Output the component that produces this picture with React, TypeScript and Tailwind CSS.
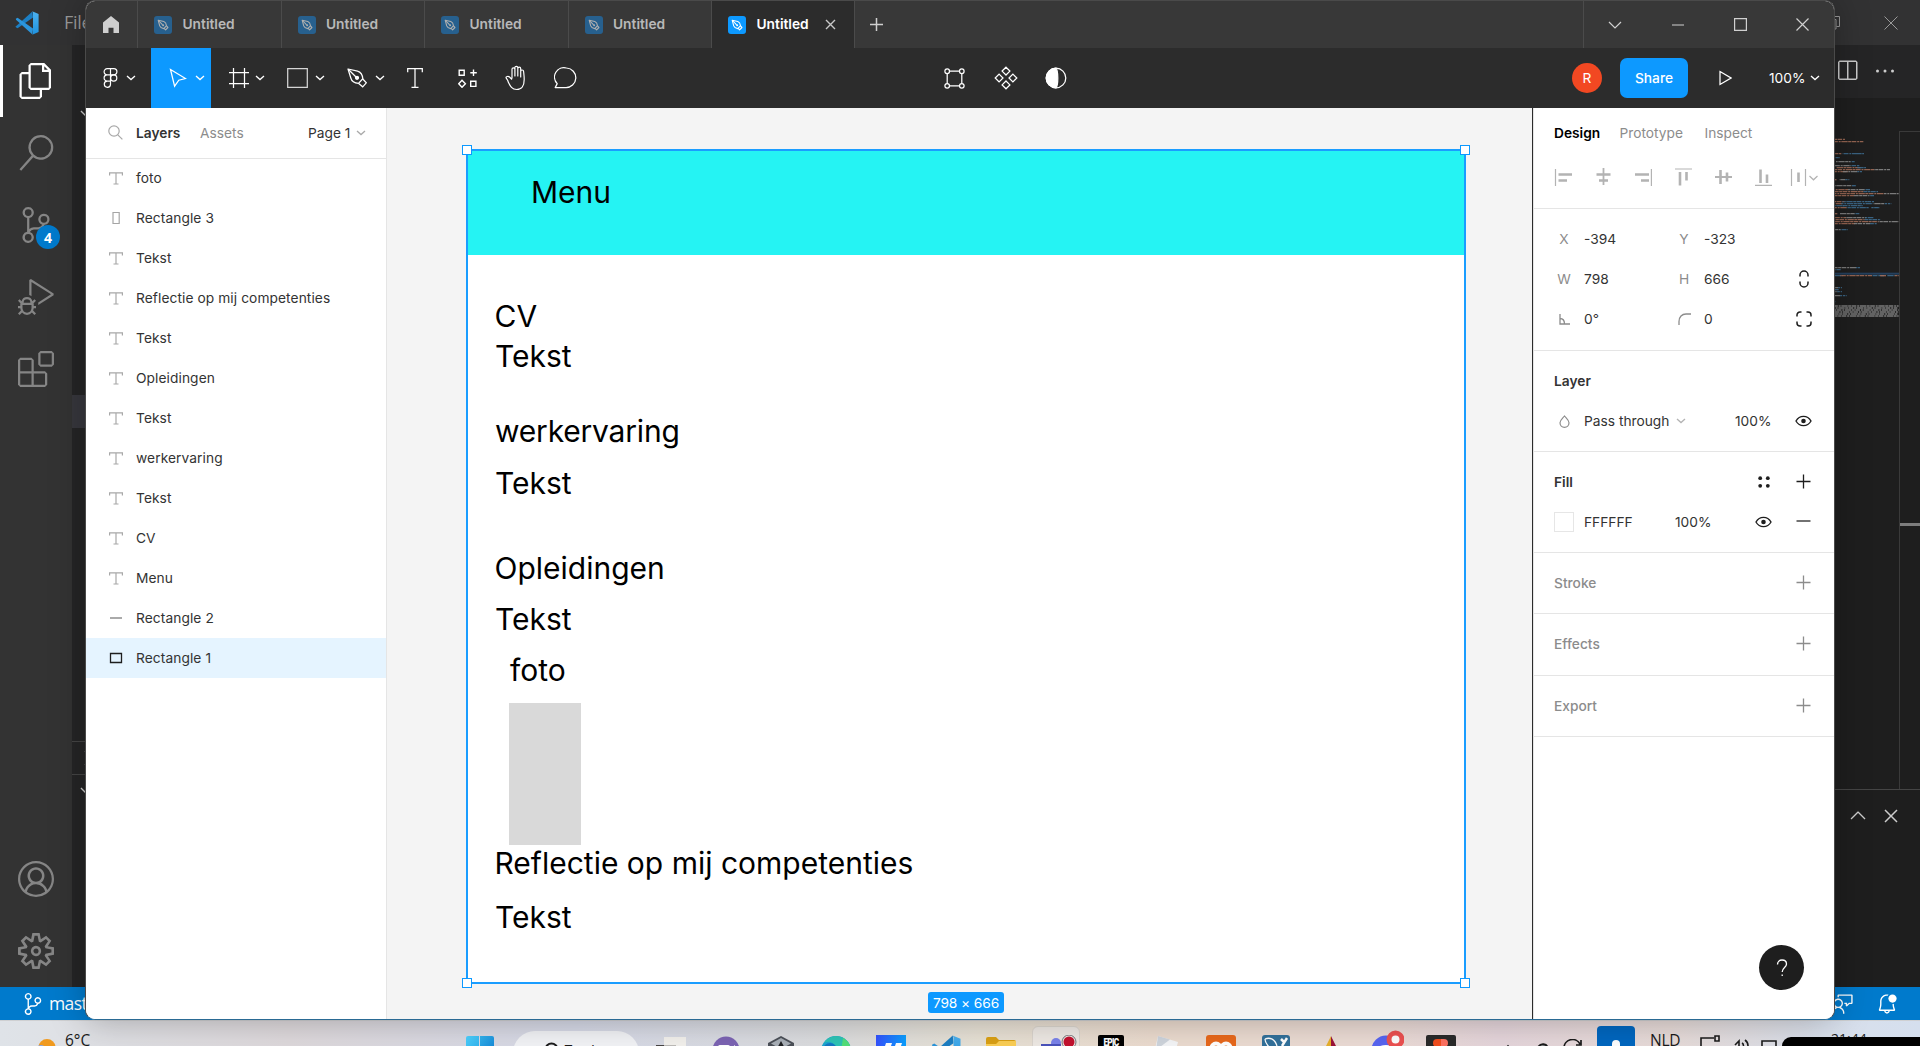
import React from "react";
import {
  VscAccount,
  VscBellDot,
  VscChevronDown,
  VscChevronRight,
  VscChevronUp,
  VscClose,
  VscDebugAlt,
  VscEllipsis,
  VscExtensions,
  VscFeedback,
  VscFiles,
  VscSearch,
  VscSettingsGear,
  VscSourceControl,
  VscSplitHorizontal,
} from "react-icons/vsc";

type IconProps = {
  w: number;
  h: number;
  box?: string;
  className?: string;
  sw?: number;
  children: React.ReactNode;
};

function Icon({ w, h, box, className = "", sw = 1.25, children }: IconProps) {
  return (
    <svg
      width={w}
      height={h}
      viewBox={box ?? `0 0 ${w} ${h}`}
      fill="none"
      stroke="currentColor"
      strokeWidth={sw}
      className={`shrink-0 ${className}`}
    >
      {children}
    </svg>
  );
}

function Chevron({ className = "" }: { className?: string }) {
  return (
    <Icon w={10} h={6} sw={1.3} className={className}>
      <path d="M1 1l4 3.6L9 1" />
    </Icon>
  );
}

/* ---------------------------- Code editor window --------------------------- */

type MinimapRow = [x: number, y: number, w: number, color: string];

const ORANGE = "#a8705a";
const BLUE = "#3f6f93";
const GREY = "#8c8c8c";

const minimapRows: MinimapRow[] = [
  [12, 58, 34, ORANGE], [12, 65, 88, ORANGE],
  [12, 101, 22, ORANGE], [38, 101, 46, BLUE], [84, 101, 18, BLUE],
  [12, 113, 18, BLUE], [18, 125, 44, GREY], [62, 125, 12, BLUE],
  [12, 137, 50, GREY], [62, 137, 28, BLUE], [20, 143, 72, ORANGE], [80, 143, 28, BLUE],
  [14, 149, 118, ORANGE], [132, 149, 48, GREY], [14, 155, 40, ORANGE], [38, 155, 44, GREY], [82, 155, 14, BLUE],
  [12, 179, 10, ORANGE], [28, 179, 18, GREY], [46, 179, 12, BLUE],
  [14, 197, 52, GREY], [66, 197, 14, BLUE],
  [12, 209, 42, ORANGE], [54, 209, 50, GREY], [104, 209, 16, BLUE],
  [12, 215, 88, ORANGE], [100, 215, 44, BLUE], [12, 221, 150, ORANGE], [162, 221, 44, GREY],
  [12, 227, 60, ORANGE], [72, 227, 46, GREY], [118, 227, 14, BLUE],
  [12, 245, 34, ORANGE], [36, 245, 76, BLUE], [112, 245, 20, BLUE],
  [12, 251, 26, ORANGE], [34, 251, 94, BLUE], [130, 251, 34, GREY], [164, 251, 20, BLUE],
  [12, 257, 30, BLUE], [38, 257, 60, BLUE],
  [14, 263, 36, ORANGE], [50, 263, 66, BLUE], [124, 263, 26, BLUE],
  [12, 281, 10, ORANGE], [30, 281, 44, GREY], [74, 281, 14, BLUE],
  [12, 293, 36, ORANGE], [46, 293, 62, GREY], [106, 293, 24, BLUE],
  [12, 299, 92, ORANGE], [104, 299, 48, BLUE], [12, 305, 134, ORANGE], [146, 305, 60, GREY],
  [12, 311, 62, ORANGE], [72, 311, 48, GREY], [120, 311, 22, BLUE],
  [12, 329, 20, GREY], [32, 329, 22, BLUE],
  [12, 443, 66, GREY], [78, 443, 12, BLUE], [12, 449, 20, BLUE],
  [12, 467, 26, BLUE], [30, 467, 96, ORANGE], [126, 467, 36, BLUE], [150, 467, 18, ORANGE], [170, 467, 24, BLUE], [194, 467, 12, ORANGE],
  [12, 503, 12, GREY], [24, 503, 12, BLUE], [12, 509, 14, BLUE], [12, 515, 10, GREY], [22, 515, 14, BLUE],
  [12, 527, 18, GREY], [30, 527, 20, BLUE], [12, 545, 6, BLUE],
  [12, 558, 194, GREY], [12, 564, 190, GREY], [12, 570, 194, GREY], [12, 576, 194, GREY], [12, 582, 190, GREY], [12, 588, 194, GREY],
];

function Minimap() {
  return (
    <svg width="65" height="200" viewBox="12 0 195 600" className="shrink-0">
      <rect x="12" y="458" width="195" height="6" fill="#264f78" opacity="0.7" />
      {minimapRows.map(([x, y, w, color], i) => (
        <path
          key={i}
          d={`M${x} ${y}h${w}`}
          stroke={color}
          strokeWidth="4"
          strokeDasharray="9 1.5 14 2.5 6 2 19 1.5"
          strokeDashoffset={(i * i * 13) % 55}
          opacity="0.85"
        />
      ))}
    </svg>
  );
}

function EditorLogo({ size, id }: { size: number; id: string }) {
  return (
    <svg width={size} height={size} viewBox="0 0 24 24" className="shrink-0">
      <defs>
        <linearGradient id={id} x1="0" y1="0" x2="0" y2="1">
          <stop offset="0" stopColor="#4db2f0" />
          <stop offset="1" stopColor="#1f93e0" />
        </linearGradient>
      </defs>
      <path d="M1 15.2L17.4 .4 18 6.6 2.6 17.2 .8 16.2z" fill="#1c7fc4" />
      <path d="M1 8.8L17.4 23.6 18 17.4 2.6 6.8 .8 7.8z" fill="#2b95dc" />
      <path d="M17.2.3L23.6 3v18l-6.4 2.7c.5-.4.8-.8.8-1.6V2c0-.8-.3-1.300-.8-1.700z" fill={`url(#${id})`} />
    </svg>
  );
}

function ActivityBar() {
  const cell = "relative flex h-18 w-18 shrink-0 items-center justify-center text-[36px]";
  return (
    <div className="flex w-18 shrink-0 flex-col bg-[#333333] text-[#858585]">
      <div className="flex h-18 w-18 shrink-0 items-center border-l-3 border-white pl-[15px] text-[36px] text-white">
        <VscFiles />
      </div>
      <div className={cell}><VscSearch /></div>
      <div className={cell}>
        <VscSourceControl />
        <span className="absolute top-9 left-9 flex size-6 items-center justify-center rounded-full bg-[#007acc] font-['Open_Sans',sans-serif] text-[14px] font-bold text-white">
          4
        </span>
      </div>
      <div className={cell}><VscDebugAlt /></div>
      <div className={cell}><VscExtensions /></div>
      <div className="grow" />
      <div className={cell}><VscAccount /></div>
      <div className={cell}><VscSettingsGear /></div>
    </div>
  );
}

function SideBar() {
  return (
    <div className="flex w-100 shrink-0 flex-col bg-[#252526] text-[24px] text-[#cccccc]">
      <div className="flex h-[350px] shrink-0 items-start pt-[57px] pl-[4px]"><VscChevronDown /></div>
      <div className="h-[33px] shrink-0 bg-[#37373d]" />
      <div className="grow" />
      <div className="flex h-[33px] shrink-0 items-center border-t border-[#454545] pl-[4px]"><VscChevronRight /></div>
      <div className="flex h-[213px] shrink-0 items-start border-t border-[#454545] pt-[4px] pl-[4px]"><VscChevronDown /></div>
    </div>
  );
}

function CodeEditor() {
  return (
    <div className="flex h-255 flex-col bg-[#1e1e1e] font-['Open_Sans',sans-serif] text-[18px]">
      <div className="flex h-[45px] shrink-0 items-center bg-[#323233] pl-[15px] text-[#999999]">
        <EditorLogo size={24} id="titleLogo" />
        <span className="ml-[25px] tracking-[-0.3px]">File</span>
        <div className="grow" />
        <Icon w={14} h={14} sw={1} className="mr-[44px]">
          <path d="M.5 3.500h9.500v9.500H.5zM3.500 3V.5h10v10h-3" />
        </Icon>
        <Icon w={14} h={14} sw={1} className="mr-[22px]">
          <path d="M.5.5l13 13M13.500.5l-13 13" />
        </Icon>
      </div>
      <div className="flex grow">
        <ActivityBar />
        <SideBar />
        <div className="flex grow flex-col">
          <div className="flex h-[53px] shrink-0 items-center justify-end bg-[#252526] pr-[23px] pb-[2px] text-[24px] text-[#cccccc]">
            <VscSplitHorizontal className="mr-[14px]" />
            <VscEllipsis />
          </div>
          <div className="flex h-[691px] shrink-0 justify-end">
            <div className="pt-[22px]"><Minimap /></div>
            <div className="mt-[33px] w-[21px] border-t border-l border-[#3a3a3a]">
              <div className="mt-[391px] h-[3px] bg-[#7d7d7d]" />
            </div>
          </div>
          <div className="flex grow items-start justify-end border-t border-[#454545] pt-[14px] pr-[17px] text-[24px] text-[#cccccc]">
            <VscChevronUp className="mr-[9px]" />
            <VscClose />
          </div>
        </div>
      </div>
      <div className="flex h-[33px] shrink-0 items-center bg-[#007acc] pl-[22px] text-white">
        <VscSourceControl className="size-[22px]" />
        <span className="ml-[5px] text-[17.500px] tracking-[-0.6px]">master</span>
        <div className="grow" />
        <VscFeedback className="mr-[22px] size-[22px]" />
        <VscBellDot className="mr-[22px] size-[22px]" />
      </div>
    </div>
  );
}

/* ------------------------------ Design app bars ----------------------------- */

function PenTile({ active }: { active: boolean }) {
  return (
    <svg width="18" height="18" viewBox="0 0 18 18" className={active ? "shrink-0" : "shrink-0 opacity-60"}>
      <rect width="18" height="18" rx="3" fill={active ? "#0d99ff" : "#1c7cc8"} />
      <g fill="none" stroke="#fff" strokeWidth="1.1" strokeLinejoin="round">
        <path d="M4.200 4.200l5.600 1.300c1.500.6 2.500 2.200 2.700 4.200l-2.700 2.900c-2-.2-3.500-1.100-4.100-2.700z" />
        <path d="M4.500 4.500L8.600 8.900M12.500 10l1.400 1.500-2.300 2.300-1.500-1.400" />
        <circle cx="9.100" cy="9.300" r="1" fill="#fff" stroke="none" />
      </g>
    </svg>
  );
}

function WindowButton({ children }: { children: React.ReactNode }) {
  return <div className="flex w-[62.500px] items-center justify-center">{children}</div>;
}

function TabBar() {
  return (
    <div className="flex h-[47px] shrink-0 items-stretch bg-[#383838] text-[13.75px] font-semibold text-[#b8b8b8]">
      <div className="flex w-[52px] items-center border-r border-[#4b4b4b] pl-[17px]">
        <svg width="16" height="17" viewBox="0 0 16 17" fill="#cfcfcf">
          <path d="M8 0l8 6.500V17h-5.500v-5.300h-5V17H0V6.500z" />
        </svg>
      </div>
      {[0, 1, 2, 3].map((n) => (
        <div key={n} className="flex w-[143.5px] items-center border-r border-[#4b4b4b] pl-4">
          <PenTile active={false} />
          <span className="ml-[10.500px] pb-px">Untitled</span>
        </div>
      ))}
      <div className="flex w-[143px] items-center border-r border-[#4b4b4b] bg-[#2c2c2c] pl-4 text-white">
        <PenTile active />
        <span className="ml-[10.500px] pb-px">Untitled</span>
        <Icon w={11} h={11} sw={1.4} className="ml-[16px] text-[#c8c8c8]">
          <path d="M1 1l9 9M10 1l-9 9" />
        </Icon>
      </div>
      <Icon w={13} h={13} sw={1.5} className="ml-[15px] self-center text-[#d0d0d0]">
        <path d="M6.500 0v13M0 6.500h13" />
      </Icon>
      <div className="grow" />
      <div className="flex w-[251px] border-l border-[#4b4b4b] text-[#d0d0d0]">
        <WindowButton><Icon w={14} h={8} sw={1.2}><path d="M1 1l6 6 6-6" /></Icon></WindowButton>
        <WindowButton><Icon w={12} h={2} sw={1.2}><path d="M0 1h12" /></Icon></WindowButton>
        <WindowButton><Icon w={13} h={13} sw={1.2}><path d="M.6.6h11.800v11.800H.6z" /></Icon></WindowButton>
        <WindowButton><Icon w={13} h={13} sw={1.2}><path d="M.5.5l12 12M12.500.5l-12 12" /></Icon></WindowButton>
      </div>
    </div>
  );
}

function DropTool({ children, active = false }: { children: React.ReactNode; active?: boolean }) {
  return (
    <div className={`flex w-15 items-center justify-end pr-[6px] ${active ? "bg-[#0d99ff]" : ""}`}>
      {children}
      <Chevron className="ml-[6px]" />
    </div>
  );
}

function Tool({ children }: { children: React.ReactNode }) {
  return <div className="flex w-[50px] items-center justify-center">{children}</div>;
}

function Toolbar() {
  return (
    <div className="flex h-15 shrink-0 bg-[#2c2c2c] text-white">
      <div className="flex w-[65px] items-center pl-[17px]">
        <Icon w={15} h={20} sw={1.2}>
          <path d="M7.500.7H4.200a3 3 0 000 6.200h3.300zM7.500.7h3.300a3 3 0 010 6.200H7.500zM7.500 6.900H4.200a3 3 0 000 6.200h3.300zM7.500 13.100H4.200a3.100 3.100 0 103.300 3.100z" />
          <circle cx="10.700" cy="10" r="3.100" />
        </Icon>
        <Chevron className="ml-[8px]" />
      </div>
      <DropTool active>
        <Icon w={18} h={20} className="mr-[2.500px]">
          <path d="M1.500 1.500l15 9-6.700 1.700-4.200 6z" strokeLinejoin="miter" />
        </Icon>
      </DropTool>
      <DropTool>
        <Icon w={20} h={20}>
          <path d="M4.500 0v20M15.500 0v20M0 4.500h20M0 15.500h20" />
        </Icon>
      </DropTool>
      <DropTool>
        <Icon w={21} h={20} className="mr-[1px]">
          <path d="M.7.7h19.600v18.600H.7z" stroke="#d5d5d5" />
        </Icon>
      </DropTool>
      <DropTool>
        <Icon w={21} h={20} className="mr-[1px]">
          <path d="M1 1l9.500 2.200c3 .9 5 3.500 5.300 7.600l-4.300 4.600C7.300 15 4.700 13.400 3.800 10z" strokeLinejoin="round" />
          <path d="M1.500 1.500l8 8M15.800 11l3.500 3.800-3.600 4-4-3.400" />
          <circle cx="10" cy="9.800" r="1.500" fill="currentColor" />
        </Icon>
      </DropTool>
      <Tool>
        <Icon w={16} h={20} className="-ml-[2px]">
          <path d="M.7 4.200V.7h14.600v3.500M8 .7v18.600M4.500 19.300h7" />
        </Icon>
      </Tool>
      <Tool>
        <Icon w={19} h={19} sw={1.4} className="ml-[2px]">
          <path d="M1.200 1.200h5v5h-5zM12.700 12.200h5.200v5.200h-5.200zM15.500.5v6.500M12.300 3.700h6.500M4 11.200l3.400 3.600L4 18.300.7 14.800z" />
        </Icon>
      </Tool>
      <Tool>
        <Icon w={23} h={26} sw={1.200} className="ml-[1px]">
          <path d="M7 13.500V4.300c0-2 2.900-2 2.900 0V11 2.800c0-2 2.900-2 2.900 0V11 3.700c0-2 2.900-2 2.900 0v8.300-5.500c0-2 2.900-2 2.900 0 .3 3 .6 4.500.6 8 0 6.500-2.500 10-7.500 10-5 0-6.500-3.500-8.500-7.500C3 14.500 1 13.500 1 12.500s2.300-1.500 3.500-.5L7 14.500" strokeLinejoin="round" />
        </Icon>
      </Tool>
      <Tool>
        <Icon w={23} h={22} className="-ml-[1px]">
          <path d="M12.500 1a9.400 9.400 0 11-1 19.600H1.200l2-4A9.400 9.400 0 0112.500 1z" strokeLinejoin="round" />
        </Icon>
      </Tool>
      <div className="ml-[339px] flex">
        <Tool>
          <Icon w={21} h={21} className="-ml-[1px]">
            <circle cx="3.200" cy="3.200" r="2.300" /><circle cx="17.800" cy="3.200" r="2.300" />
            <circle cx="3.200" cy="17.800" r="2.300" /><circle cx="17.800" cy="17.800" r="2.300" />
            <path d="M5.500 3.200h10M5.500 17.800h10M3.200 5.500v10M17.800 5.500v10" />
          </Icon>
        </Tool>
        <Tool>
          <Icon w={24} h={24} className="ml-[1px]">
            <path d="M12 1.200l3.900 3.900L12 9 8.100 5.100zM12 15l3.900 3.900-3.900 3.900-3.900-3.900zM5.100 8.100L9 12l-3.900 3.900L1.200 12zM18.900 8.100l3.900 3.900-3.900 3.900L15 12z" />
          </Icon>
        </Tool>
        <Tool>
          <Icon w={22} h={22} className="ml-[1px]">
            <circle cx="11" cy="11" r="9.800" />
            <path d="M11 1.200a9.800 9.800 0 000 19.600c2.400-2.500 2.400-17 0-19.600z" fill="currentColor" />
          </Icon>
        </Tool>
      </div>
      <div className="grow" />
      <div className="flex items-center text-[13.75px]">
        <div className="flex size-[30px] items-center justify-center rounded-full bg-[#f24822]">R</div>
        <div className="ml-[18px] flex h-10 w-17 items-center justify-center rounded-[7px] bg-[#0d99ff] pb-px font-medium">Share</div>
        <Icon w={13} h={16} className="ml-[31px]">
          <path d="M1 1.500l11 6.500-11 6.500z" />
        </Icon>
        <span className="ml-[37px] w-[35px]">100%</span>
        <Chevron className="mr-[14px] ml-[6px]" />
      </div>
    </div>
  );
}

/* -------------------------------- Layers panel ------------------------------ */

type Layer = { name: string; kind: "text" | "tall" | "line" | "box" };

const layers: Layer[] = [
  { name: "foto", kind: "text" },
  { name: "Rectangle 3", kind: "tall" },
  { name: "Tekst", kind: "text" },
  { name: "Reflectie op mij competenties", kind: "text" },
  { name: "Tekst", kind: "text" },
  { name: "Opleidingen", kind: "text" },
  { name: "Tekst", kind: "text" },
  { name: "werkervaring", kind: "text" },
  { name: "Tekst", kind: "text" },
  { name: "CV", kind: "text" },
  { name: "Menu", kind: "text" },
  { name: "Rectangle 2", kind: "line" },
  { name: "Rectangle 1", kind: "box" },
];

function LayerIcon({ kind }: { kind: Layer["kind"] }) {
  if (kind === "box") {
    return <Icon w={14} h={12} sw={1.3} className="text-[#1e1e1e]"><path d="M1.500 1.500h11v9h-11z" /></Icon>;
  }
  if (kind === "line") {
    return <Icon w={14} h={12} sw={2} className="text-[#aaaaaa]"><path d="M1 6h12" /></Icon>;
  }
  if (kind === "tall") {
    return <Icon w={14} h={14} sw={1.2} className="text-[#a5a5a5]"><path d="M4 1.500h6.200v11H4z" /></Icon>;
  }
  return (
    <Icon w={14} h={13} sw={1.2} className="text-[#a8a8a8]">
      <path d="M.6 3.500V.9h12.800v2.600M7 .9v11M4.500 12h5" />
    </Icon>
  );
}

function LayersPanel() {
  return (
    <div className="flex w-[301px] shrink-0 flex-col border-r border-[#e5e5e5] bg-white">
      <div className="flex h-[51px] shrink-0 items-center border-b border-[#e5e5e5] pl-[22px]">
        <Icon w={15} h={15} sw={1.2} className="-mt-[1px] text-[#a8a8a8]">
          <circle cx="6" cy="6" r="5.200" /><path d="M9.800 9.800l4.600 4.600" />
        </Icon>
        <span className="ml-[13px] w-[64px] font-semibold">Layers</span>
        <span className="w-[108px] text-[#8c8c8c]">Assets</span>
        <span className="w-[43px] whitespace-nowrap">Page 1</span>
        <Chevron className="ml-[5px] text-[#aaaaaa]" />
      </div>
      <div className="-mt-px flex flex-col">
        {layers.map((l, i) => (
          <div key={i} className={`flex h-10 items-center pl-[23px] ${l.kind === "box" ? "bg-[#e5f4ff]" : ""}`}>
            <LayerIcon kind={l.kind} />
            <span className="ml-[13px] tracking-[0.08px]">{l.name}</span>
          </div>
        ))}
      </div>
    </div>
  );
}

/* ----------------------------------- Canvas --------------------------------- */

function Handle({ className }: { className: string }) {
  return <div className={`absolute size-[10px] border-[1.5px] border-[#0d99ff] bg-white ${className}`} />;
}

/* Positions are relative to the canvas' top-left corner. */
function Canvas() {
  const label = "absolute whitespace-nowrap";
  return (
    <div className="relative grow overflow-hidden bg-[#f4f4f4] text-[30px] leading-9 text-black">
      <div className="absolute top-[42px] left-[80px] h-[833px] w-[998px] bg-white" />
      <div className="absolute top-[42px] left-[80px] h-[105px] w-[998px] bg-[#25f3f3]" />
      <div className={`${label} top-[66px] left-[144px]`}>Menu</div>
      <div className={`${label} top-[190px] left-[107.500px]`}>CV</div>
      <div className={`${label} top-[230px] left-[108px]`}>Tekst</div>
      <div className={`${label} top-[305px] left-[108px] tracking-[-0.2px]`}>werkervaring</div>
      <div className={`${label} top-[357px] left-[108px]`}>Tekst</div>
      <div className={`${label} top-[442px] left-[107.500px]`}>Opleidingen</div>
      <div className={`${label} top-[493px] left-[108px]`}>Tekst</div>
      <div className={`${label} top-[544px] left-[123px]`}>foto</div>
      <div className="absolute top-[595px] left-[122px] h-[142px] w-[72px] bg-[#d9d9d9]" />
      <div className={`${label} top-[737px] left-[107.500px]`}>Reflectie op mij competenties</div>
      <div className={`${label} top-[791px] left-[108px]`}>Tekst</div>
      <div className="absolute top-[41px] left-[79px] h-[835px] w-[1000px] border-2 border-[#1a9dff]" />
      <Handle className="top-[37px] left-[75px]" />
      <Handle className="top-[37px] left-[1073px]" />
      <Handle className="top-[870px] left-[75px]" />
      <Handle className="top-[870px] left-[1073px]" />
      <div className="absolute top-[884px] left-[541px] flex h-[21px] w-[76px] items-center justify-center rounded-[3px] bg-[#0d99ff] text-[13.75px] tracking-[-0.1px] whitespace-nowrap text-white">
        798 × 666
      </div>
    </div>
  );
}

/* --------------------------------- Properties ------------------------------- */

function Slot({ children }: { children?: React.ReactNode }) {
  return <div className="flex h-10 w-10 shrink-0 items-center justify-center text-[#8c8c8c]">{children}</div>;
}

function Plus({ dim = false }: { dim?: boolean }) {
  return (
    <Icon w={15} h={15} sw={1.3} className={dim ? "-mt-[2px] mr-[1px] text-[#8c8c8c]" : "-mt-[2px] mr-[1px] text-[#1e1e1e]"}>
      <path d="M7.500.5v14M.5 7.500h14" />
    </Icon>
  );
}

function Eye() {
  return (
    <Icon w={17} h={12} sw={1.4} className="mr-[1px] text-[#1e1e1e]">
      <path d="M1 6c3.500-6.200 11.500-6.200 15 0-3.500 6.200-11.500 6.200-15 0z" />
      <circle cx="8.500" cy="6" r="2.300" fill="currentColor" stroke="none" />
    </Icon>
  );
}

function AlignRow() {
  return (
    <div className="flex h-[51px] border-b border-[#e5e5e5] pl-[9px] text-[#b3b3b3]">
      <div className="flex h-[38px] [&>svg]:mt-[10px] [&>svg]:mr-[22px]">
        <Icon w={18} h={18} sw={2} className="ml-[11px]"><path d="M1.500 1v17" strokeWidth="1.200" /><path d="M4.500 6.500H18M4.500 12.500H13" strokeWidth="2.600" /></Icon>
        <Icon w={18} h={18} sw={2}><path d="M9.500 0v17" strokeWidth="1.800" /><path d="M2.500 6.500h14M5 12.500h9" strokeWidth="2.600" /></Icon>
        <Icon w={18} h={18} sw={2}><path d="M17.400 1v17" strokeWidth="1.200" /><path d="M1 6.500h14M7 12.500h8" strokeWidth="2.600" /></Icon>
        <Icon w={18} h={18} sw={2}><path d="M1 1h17" strokeWidth="1.200" /><path d="M6 4v13.500M12.500 4v8.500" strokeWidth="2.600" /></Icon>
        <Icon w={18} h={18} sw={2}><path d="M1 9h17" strokeWidth="1.800" /><path d="M6.500 2v14M13 4.500v9" strokeWidth="2.600" /></Icon>
        <Icon w={18} h={18} sw={2}><path d="M1 17.400h17" strokeWidth="1.200" /><path d="M6.500 1.500V15M13 6.500V15" strokeWidth="2.600" /></Icon>
        <Icon w={28} h={18} sw={2} className="-ml-[4px]"><path d="M1.500 1v17M15.500 1v17" strokeWidth="1.200" /><path d="M8.500 4.500v9.500" strokeWidth="2.600" /><path d="M19.500 8l4 3.800 4-3.800" strokeWidth="1.200" /></Icon>
      </div>
    </div>
  );
}

function FieldRow({ a, av, b, bv, end }: { a: React.ReactNode; av: string; b: React.ReactNode; bv: string; end?: React.ReactNode }) {
  return (
    <div className="flex h-10 items-center pl-[10px]">
      <Slot>{a}</Slot>
      <span className="w-20">{av}</span>
      <Slot>{b}</Slot>
      <span className="w-20">{bv}</span>
      <Slot>{end}</Slot>
    </div>
  );
}

function EmptySection({ title, className }: { title: string; className: string }) {
  return (
    <div className={`flex border-b border-[#e5e5e5] pt-[10px] pl-5 font-medium text-[#8c8c8c] ${className}`}>
      <span className="flex h-10 w-[230px] items-center">{title}</span>
      <Slot><Plus dim /></Slot>
    </div>
  );
}

function PropertiesPanel() {
  return (
    <div className="relative flex w-[302px] shrink-0 flex-col border-l border-[#2c2c2c] bg-white shadow-[inset_1px_0_0_#e5e5e5]">
      <div className="ml-px flex flex-col">
        <div className="flex h-[50px] items-center pl-5 text-[#8c8c8c]">
          <span className="w-[65.500px] font-semibold text-black">Design</span>
          <span className="w-[85px]">Prototype</span>
          <span>Inspect</span>
        </div>
        <AlignRow />
        <div className="h-[142px] border-b border-[#e5e5e5] pt-[10px]">
          <FieldRow a="X" av="-394" b="Y" bv="-323" />
          <FieldRow
            a="W" av="798" b="H" bv="666"
            end={
              <Icon w={10} h={18} sw={1.5} className="mr-[1px] text-[#1e1e1e]">
                <path d="M1 6.500V5a4 4 0 018 0v1.500M1 11.500V13a4 4 0 008 0v-1.500" />
              </Icon>
            }
          />
          <FieldRow
            a={<Icon w={11} h={11} sw={1.300}><path d="M1 0v10h10M1 4.500c3 0 4.500 2 4.500 5.500" /></Icon>}
            av="0°"
            b={<Icon w={13} h={12} sw={1.3}><path d="M1 12V8.500C1 4 4 1 8 1h5" /></Icon>}
            bv="0"
            end={
              <Icon w={16} h={16} sw={1.5} className="text-[#1e1e1e]">
                <path d="M1 5.500V4a3 3 0 013-3h1.500M10.500 1H12a3 3 0 013 3v1.500M15 10.500V12a3 3 0 01-3 3h-1.500M5.500 15H4a3 3 0 01-3-3v-1.500" />
              </Icon>
            }
          />
        </div>
        <div className="h-[101px] border-b border-[#e5e5e5] pt-[10px]">
          <div className="flex h-10 items-center pl-5 font-semibold">Layer</div>
          <div className="flex h-10 items-center pl-[10px]">
            <Slot>
              <Icon w={11} h={13} sw={1.2}><path d="M5.500 1C3.500 3.500 1 5.200 1 7.800a4.500 4.500 0 009 0C10 5.200 7.500 3.500 5.500 1z" /></Icon>
            </Slot>
            <span className="w-[92px] whitespace-nowrap">Pass through</span>
            <Chevron className="text-[#b3b3b3]" />
            <span className="ml-[49px] w-[49px]">100%</span>
            <Slot><Eye /></Slot>
          </div>
        </div>
        <div className="h-[101px] border-b border-[#e5e5e5] pt-[10px]">
          <div className="flex h-10 items-center pl-5">
            <span className="w-[190px] font-semibold">Fill</span>
            <Slot>
              <Icon w={12} h={12} className="-mt-[1px] mr-[1px] text-[#1e1e1e]">
                <g fill="currentColor" stroke="none">
                  <circle cx="2.200" cy="2.200" r="1.900" /><circle cx="9.800" cy="2.200" r="1.900" />
                  <circle cx="2.200" cy="9.800" r="1.900" /><circle cx="9.800" cy="9.800" r="1.900" />
                </g>
              </Icon>
            </Slot>
            <Slot><Plus /></Slot>
          </div>
          <div className="flex h-10 items-center pl-5">
            <div className="size-5 border border-[#e6e6e6] bg-white" />
            <span className="ml-[10px] w-[91px]">FFFFFF</span>
            <span className="w-[69px]">100%</span>
            <Slot><Eye /></Slot>
            <Slot><Icon w={15} h={2} className="-mt-[2px] mr-[1px] text-[#1e1e1e]"><path d="M.5 1h14" /></Icon></Slot>
          </div>
        </div>
        <EmptySection title="Stroke" className="h-[61px]" />
        <EmptySection title="Effects" className="h-[62px]" />
        <EmptySection title="Export" className="h-[61px]" />
      </div>
      <div className="absolute right-[30px] bottom-[29px] flex size-[45px] items-center justify-center rounded-full bg-[#1e1e1e]">
        <Icon w={12} h={18} sw={1.3} className="text-white">
          <path d="M1.500 5.500C1.500 2.500 3.500 1 6 1s4.500 1.500 4.500 4c0 3.500-4.300 3.700-4.300 8" />
          <path d="M6.200 15.500v1.500" />
        </Icon>
      </div>
    </div>
  );
}

function DesignApp() {
  return (
    <div className="absolute top-0 left-[85px] flex h-255 w-[1750px] flex-col overflow-hidden rounded-[10px] border border-[#4a4a4a] border-b-[#2a6a94] bg-white font-['Inter',sans-serif] text-[13.75px] leading-5 text-[#333333]">
      <TabBar />
      <Toolbar />
      <div className="flex grow">
        <LayersPanel />
        <Canvas />
        <PropertiesPanel />
      </div>
    </div>
  );
}

/* ----------------------------------- Taskbar -------------------------------- */

function AppCell({ children, top = 15 }: { children: React.ReactNode; top?: number }) {
  return (
    <div className="flex h-[60px] w-[55px] shrink-0 items-start justify-center" style={{ paddingTop: top }}>
      {children}
    </div>
  );
}

function Taskbar() {
  return (
    <div className="flex h-[26px] items-start overflow-hidden border-t border-[#cfd0d2] bg-[linear-gradient(90deg,#dfe3e8_0%,#dfdadd_15%,#d7dae8_30%,#dcdddf_43%,#e8e2d6_51%,#ecdccf_60%,#ecdcd6_72%,#e6d6dc_78%,#e8dcd9_87%,#d9e0ec_95%,#d5dfee_100%)] font-['Open_Sans',sans-serif] text-[17px] leading-5 text-[#1b1b1b]">
      <svg width="22" height="22" viewBox="0 0 22 22" className="mt-[18px] ml-[35px] shrink-0">
        <circle cx="12" cy="8.500" r="8.500" fill="#f09a1f" />
        <circle cx="6" cy="11" r="5" fill="#8aa9e8" />
      </svg>
      <span className="mt-[9px] ml-[8px] w-[60px] shrink-0 text-[15.500px] whitespace-nowrap">6°C</span>
      <div className="ml-[341px] flex shrink-0 gap-px pt-[15px]">
        <div className="h-[14px] w-[13px] rounded-tl-[2px] bg-[linear-gradient(135deg,#4fd3ff,#2db0ee)]" />
        <div className="h-[14px] w-[14px] rounded-tr-[2px] bg-[linear-gradient(135deg,#33b4ee,#1286d8)]" />
      </div>
      <div className="mt-[10px] ml-[19px] flex h-[44px] w-[126px] shrink-0 items-start rounded-full bg-[#f3f4f7] pl-[31px]">
        <Icon w={15} h={18} sw={2} className="mt-[11px]"><circle cx="7.500" cy="7.500" r="6" /><path d="M3 12l-3 4" /></Icon>
        <span className="mt-[10px] ml-[5px] text-[15.500px]">Zoeken</span>
      </div>
      <div className="ml-[4px] flex shrink-0">
        <AppCell top={16}>
          <svg width="30" height="30"><rect x="8" width="22" height="22" fill="#f4f2ee" /><rect y="8" width="20" height="20" fill="#474543" /><rect x="8" y="8" width="12" height="10" fill="#bdbbb8" /></svg>
        </AppCell>
        <AppCell>
          <svg width="28" height="28"><circle cx="14" cy="14" r="13.500" fill="#7c64b4" /><rect x="6" y="9" width="12" height="10" rx="2" fill="#fff" /><path d="M19 12l4-3v9l-4-3z" fill="#fff" /></svg>
        </AppCell>
        <AppCell>
          <svg width="26" height="30"><path d="M13 0l13 7v16l-13 7L0 23V7z" fill="#4b5058" /><path d="M13 2l10 5.500L13 13 3 7.500z" fill="#a9b0b8" /><path d="M13 5l6 11H7z" fill="#1d1f22" /></svg>
        </AppCell>
        <AppCell>
          <svg width="30" height="30"><circle cx="15" cy="15" r="15" fill="#1ba7d0" /><path d="M15 0c8 0 15 6 15 15H15C17 9 9 3 3 7c3-5 8-7 12-7z" fill="#2ec4b6" /><path d="M22 2c5 3 8 7 8 13H20z" fill="#53e07a" /><circle cx="9" cy="14" r="7" fill="#1577c4" /></svg>
        </AppCell>
        <AppCell top={14}>
          <svg width="30" height="30"><defs><linearGradient id="blueTile"><stop stopColor="#3552ff" /><stop offset="1" stopColor="#0aa0ff" /></linearGradient></defs><rect width="30" height="30" fill="url(#blueTile)" /><path d="M10 8h6l-4 12H6zM20 8h6l-4 12h-6z" fill="#fff" /></svg>
        </AppCell>
        <AppCell top={14}><EditorLogo size={30} id="taskLogo" /></AppCell>
        <AppCell top={16}>
          <svg width="30" height="26"><path d="M0 2a2 2 0 012-2h8l3 3h15a2 2 0 012 2v19H0z" fill="#dba114" /><path d="M0 7h10l3-3h17v20H0z" fill="#fccf55" /></svg>
        </AppCell>
        <div className="flex w-[55px] shrink-0 justify-center pt-[5px]">
          <div className="h-[44px] w-[48px] rounded-[6px] border border-[#dcd6cf] bg-[#efeae5] pt-[8px] pl-[8px]">
            <svg width="36" height="32"><circle cx="15" cy="8" r="5" fill="#7b83eb" /><rect y="9" width="20" height="16" fill="#4b53bc" /><circle cx="28" cy="7" r="7" fill="#efeae5" stroke="#77777d" /><circle cx="28" cy="7" r="5.500" fill="#c4122f" /></svg>
          </div>
        </div>
        <AppCell top={14}>
          <div className="h-[30px] w-[26px] rounded-[2px] bg-black pt-[3px] text-center font-['Roboto',sans-serif] text-[11px] leading-[10px] font-black tracking-[-1px] text-white">
            <span className="inline-block scale-x-[.75]">EPIC</span>
          </div>
        </AppCell>
        <AppCell top={15}>
          <svg width="26" height="28"><path d="M5 0l20 6-6 22L0 22z" fill="#f5f6f8" /><path d="M5 0l12 3.500L3 14z" fill="#cfd5dd" /></svg>
        </AppCell>
        <AppCell top={14}>
          <svg width="30" height="30"><rect width="30" height="30" rx="3" fill="#e9691c" /><circle cx="10" cy="13" r="4.500" fill="none" stroke="#fff" strokeWidth="4" /><circle cx="20" cy="13" r="4.500" fill="none" stroke="#fff" strokeWidth="4" /></svg>
        </AppCell>
        <AppCell top={14}>
          <svg width="28" height="30" fill="none" stroke="#fff"><rect width="28" height="30" rx="3" fill="#32719b" stroke="none" /><path d="M3 4c5-2 10 0 12 7M3 4c0 4 2 6 5 9" strokeWidth="1.300" /><path d="M19 4l3 3M25 3l-5 8" strokeWidth="2.500" /></svg>
        </AppCell>
        <AppCell top={15}>
          <svg width="30" height="30"><path d="M15 0v30L6 24V13L0 11 10 10z" fill="#e8b02c" /><path d="M15 0l5 10 10 1-8 8v9l-7-3z" fill="#9c1338" /></svg>
        </AppCell>
        <AppCell top={9}>
          <svg width="36" height="36"><circle cx="18" cy="20" r="14.500" fill="#5865f2" /><path d="M9 18c4-4 14-4 18 0v6H9z" fill="#fff" /><circle cx="27.500" cy="9.500" r="6.500" fill="#fff" stroke="#ed5151" strokeWidth="5" /></svg>
        </AppCell>
        <AppCell top={14}>
          <svg width="30" height="30"><rect width="30" height="30" rx="2" fill="#2a2a2a" /><path d="M15 4h-4a4 4 0 000 8h4z" fill="#f24e1e" /><path d="M15 4h3a4 4 0 010 8h-3z" fill="#ff7262" /></svg>
        </AppCell>
      </div>
      <div className="flex shrink-0 items-start pl-[34px]">
        <Icon w={12} h={8} sw={1.6} className="mt-[23px]"><path d="M1 7l5-5 5 5" /></Icon>
        <Icon w={22} h={14} sw={1.800} className="mt-[20px] ml-[15px]"><path d="M2 13c0-5 4-7 6-5 3-7 11-6 11 1 3 0 2 4 2 4z" fill="#85878b" /></Icon>
        <Icon w={20} h={18} sw={1.700} className="mt-[18px] ml-[12px]"><path d="M1 9a8.500 8.500 0 0116-4M18 1v5h-5" /></Icon>
        <div className="mt-[5px] ml-[14px] flex h-[40px] w-[38px] justify-center rounded-[4px] bg-[#0067c0] pt-[14px]">
          <div className="h-[16px] w-[8px] rounded-full bg-white" />
        </div>
        <span className="mt-[9px] ml-[15px] w-[50px] text-[15.500px] tracking-[-0.2px]">NLD</span>
        <Icon w={20} h={16} sw={1.600} className="mt-[14px]"><path d="M14 3H1v12h13M15 1h4v5h-4z" /></Icon>
        <Icon w={16} h={16} sw={1.600} className="mt-[17px] ml-[14px]"><path d="M1 7l4-4v10M8 5c2 1 2 4 0 6M11 2c4 3 4 8 0 12" /></Icon>
        <Icon w={16} h={12} sw={1.600} className="mt-[18px] ml-[11px]"><path d="M1 2h14v9H1z" /></Icon>
      </div>
      <div className="relative ml-[5px] h-[26px] w-[140px] shrink-0">
        <span className="absolute top-[8px] left-[49px] text-[14px] whitespace-nowrap">21:44</span>
        <div className="absolute top-[16px] left-0 h-[20px] w-[160px] rounded-tl-[9px] bg-black" />
      </div>
    </div>
  );
}

export default function App() {
  return (
    <div className="relative flex h-[1046px] w-[1920px] flex-col overflow-hidden bg-[#1e1e1e]">
      <CodeEditor />
      <Taskbar />
      <div className="pointer-events-none absolute top-0 left-[85px] h-[1020px] w-[1750px] rounded-[10px] shadow-[0_0_36px_rgba(0,0,0,0.28)]" />
      <DesignApp />
    </div>
  );
}
